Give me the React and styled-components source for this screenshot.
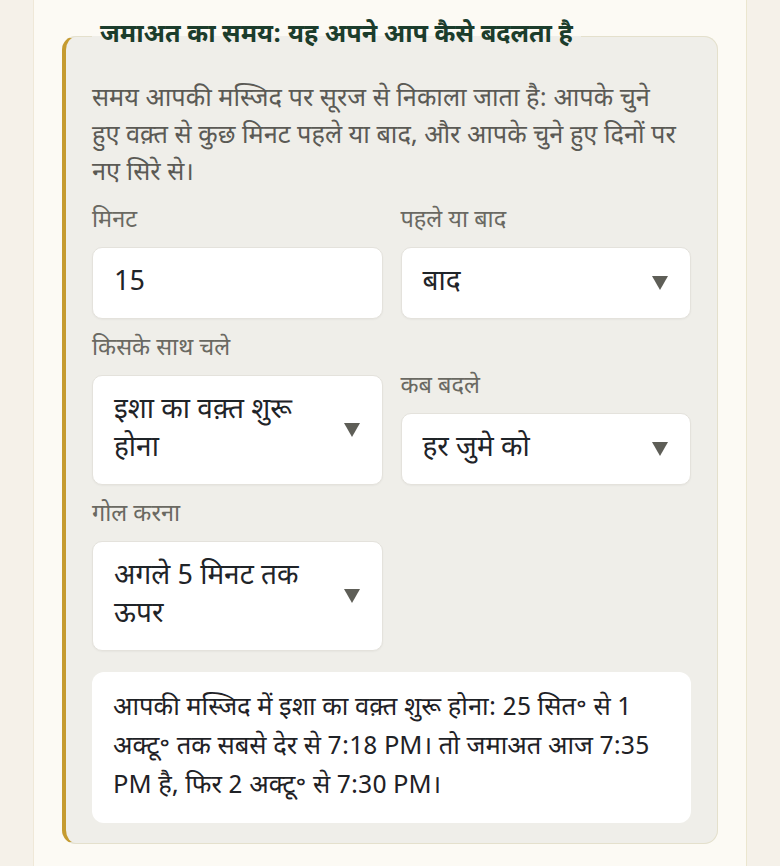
import React from "react";
import styled, { createGlobalStyle } from "styled-components";

const Global = createGlobalStyle`
  html, body { margin: 0; padding: 0; background: #f5f1e9; }
  body { font-family: "Noto Sans Devanagari", "Noto Sans", "Open Sans", sans-serif; }
  * { box-sizing: border-box; }
`;

const Page = styled.div`
  min-height: 100vh;
  display: flex;
  justify-content: center;
`;

const Panel = styled.main`
  width: 714px;
  min-height: 100vh;
  background: #fcfaf4;
  border-left: 1px solid #efe8d8;
  border-right: 1px solid #ebe6cf;
  padding: 20px 28px 23px;
`;

const Fieldset = styled.fieldset`
  margin: 0;
  min-width: 0;
  background: #efeee9;
  border: 1px solid #e4e0cc;
  border-left: 4px solid #c59b30;
  border-radius: 14px;
  padding: 29px 26px 20px;
`;

const Legend = styled.legend`
  padding: 0 8px;
  margin-left: 0;
  font-size: 25.2px;
  font-weight: 700;
  color: #1c3d2c;
  line-height: 32px;
`;

const Description = styled.p`
  margin: 0 -8px 16px 0;
  font-size: 25.3px;
  line-height: 37px;
  color: #5b5a55;
`;

const Grid = styled.div`
  display: grid;
  grid-template-columns: 1fr 1fr;
  column-gap: 18px;
  row-gap: 17px;
  align-items: end;
`;

const Field = styled.div`
  display: flex;
  flex-direction: column;
  gap: 11px;
`;

const Label = styled.label`
  font-size: 23.5px;
  line-height: 28px;
  color: #6a6962;
`;

const Control = styled.div`
  display: flex;
  align-items: center;
  gap: 20px;
  background: #ffffff;
  border: 1px solid #e4e2dc;
  border-radius: 10px;
  box-shadow: 0 1px 2px rgba(0, 0, 0, 0.04);
  padding: 16px 22px 16px 21px;
  font-size: 28px;
  line-height: 38px;
  color: #1f2428;
`;

const Value = styled.span`
  flex: 1;
  min-width: 0;
`;

const Arrow = styled.svg`
  flex: none;
  width: 16px;
  height: 14px;
  fill: #5e5e57;
`;

const Result = styled.div`
  margin-top: 21px;
  background: #ffffff;
  border-radius: 12px;
  padding: 17px 21px;
  font-size: 25.5px;
  line-height: 39px;
  color: #1f2226;
`;

function Select({ value }) {
  return (
    <Control>
      <Value>{value}</Value>
      <Arrow viewBox="0 0 16 14" aria-hidden="true">
        <polygon points="0,0 16,0 8,14" />
      </Arrow>
    </Control>
  );
}

export default function App() {
  return (
    <Page>
      <Global />
      <Panel>
        <Fieldset>
          <Legend>जमाअत का समय: यह अपने आप कैसे बदलता है</Legend>
          <Description>
            समय आपकी मस्जिद पर सूरज से निकाला जाता है: आपके चुने
            <br />
            हुए वक़्त से कुछ मिनट पहले या बाद, और आपके चुने हुए दिनों पर नए
            सिरे से।
          </Description>
          <Grid>
            <Field>
              <Label>मिनट</Label>
              <Control>
                <Value>15</Value>
              </Control>
            </Field>
            <Field>
              <Label>पहले या बाद</Label>
              <Select value="बाद" />
            </Field>
            <Field>
              <Label>किसके साथ चले</Label>
              <Select value="इशा का वक़्त शुरू होना" />
            </Field>
            <Field>
              <Label>कब बदले</Label>
              <Select value="हर जुमे को" />
            </Field>
            <Field>
              <Label>गोल करना</Label>
              <Select value="अगले 5 मिनट तक ऊपर" />
            </Field>
          </Grid>
          <Result>
            आपकी मस्जिद में इशा का वक़्त शुरू होना: 25 सित॰ से 1 अक्टू॰ तक सबसे
            देर से 7:18 PM। तो जमाअत आज 7:35 PM है, फिर 2 अक्टू॰ से 7:30 PM।
          </Result>
        </Fieldset>
      </Panel>
    </Page>
  );
}
